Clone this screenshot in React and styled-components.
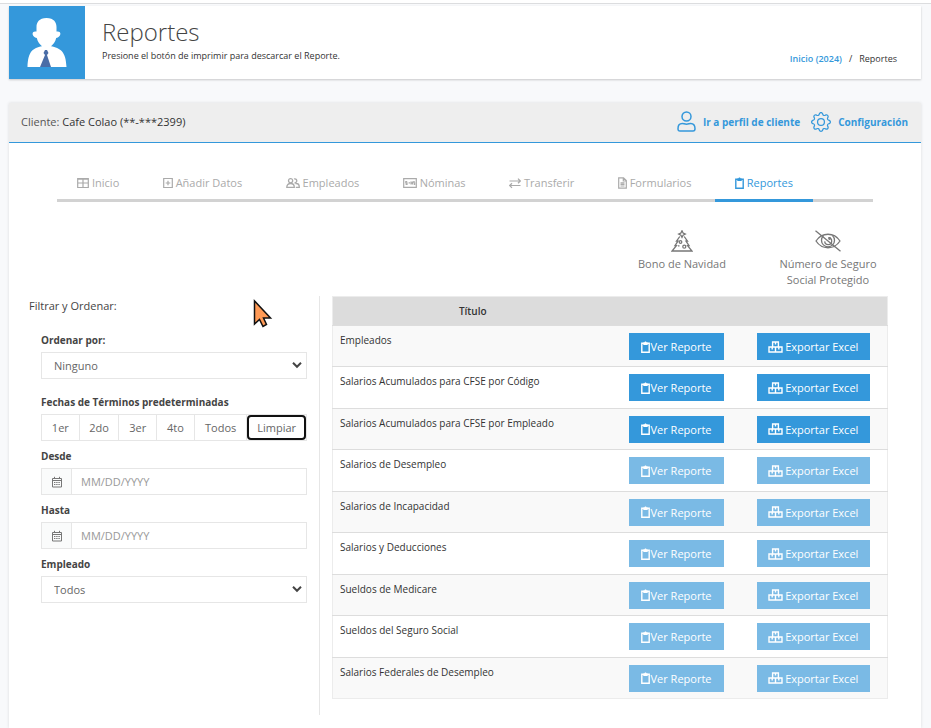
import React from 'react';
import styled, { createGlobalStyle, css } from 'styled-components';
import { BsGear } from 'react-icons/bs';

const BLUE = '#3498db';

const GlobalStyle = createGlobalStyle`
  * {
    box-sizing: border-box;
  }
  body {
    margin: 0;
    background: #f8f9fb;
    color: #444;
    font-family: 'Open Sans', sans-serif;
    font-size: 11px;
    line-height: 16px;
  }
  button, input, select {
    font-family: inherit;
  }
`;

const Page = styled.div`
  display: flex;
  flex-direction: column;
  min-height: 100vh;
  padding: 0 10px 0 9px;
`;

const TopStrip = styled.div`
  height: 4px;
  margin: 0 -10px 2px -9px;
  background: white;
  border-bottom: 1px solid #dcdddf;
`;

const TitleBar = styled.header`
  display: flex;
  height: 73px;
  margin-bottom: 24px;
  background: white;
  box-shadow: 0 1px 2px rgba(0, 0, 0, 0.2);
`;

const Avatar = styled.div`
  display: flex;
  align-items: flex-start;
  justify-content: center;
  width: 76px;
  padding-top: 12px;
  background: ${BLUE};
`;

const TitleText = styled.div`
  flex: 1;
  padding: 9px 0 0 17px;
`;

const Title = styled.h1`
  margin: 0;
  color: #444;
  font-size: 24px;
  font-weight: 300;
  line-height: 33px;
`;

const Subtitle = styled.p`
  margin: 0;
  color: #333;
  font-size: 9px;
`;

const Breadcrumb = styled.nav`
  display: flex;
  gap: 7px;
  padding: 45px 24px 0 0;
  color: #333;
  font-size: 9px;
  font-weight: 500;
`;

const Crumb = styled.a`
  color: ${BLUE};
  font-weight: 600;
  text-decoration: none;
`;

const Panel = styled.main`
  flex: 1;
  background: white;
  box-shadow: 0 0 3px rgba(0, 0, 0, 0.12);
`;

const PanelHeader = styled.div`
  display: flex;
  align-items: center;
  justify-content: space-between;
  height: 40px;
  padding: 0 13px 2px 12px;
  background: #eee;
  border-bottom: 1px solid ${BLUE};
`;

const Client = styled.span`
  color: #555;

  b {
    color: #333;
    font-weight: 400;
  }
`;

const HeaderLinks = styled.div`
  display: flex;
  align-items: center;
  gap: 11px;
`;

const HeaderLink = styled.a`
  display: flex;
  align-items: center;
  gap: 7px;
  color: ${BLUE};
  font-size: 10px;
  font-weight: 700;
  text-decoration: none;
`;

const Tabs = styled.nav`
  display: flex;
  justify-content: space-between;
  margin: 28px 48px 0;
  padding-right: 60px;
  border-bottom: 3px solid #d2d2d2;
`;

const Tab = styled.a`
  display: flex;
  align-items: center;
  gap: 3px;
  height: 31px;
  margin-bottom: -3px;
  padding: 0 20px 8px;
  color: #aaa;
  text-decoration: none;
  white-space: nowrap;
  ${({ $active }) => $active && css`
    color: ${BLUE};
    box-shadow: inset 0 -3px 0 ${BLUE};
  `}
`;

const Actions = styled.div`
  display: flex;
  justify-content: flex-end;
  padding: 28px 20px 8px;
`;

const Action = styled.button`
  display: flex;
  flex-direction: column;
  align-items: center;
  gap: 4px;
  width: 146px;
  padding: 0 20px;
  background: none;
  border: 0;
  color: #777;
  font-size: 11px;
  line-height: 16px;
`;

const Content = styled.div`
  display: grid;
  grid-template-columns: 311px 1fr;
  padding-right: 33px;
`;

const Filters = styled.form`
  padding: 2px 12px 103px 20px;
  border-right: 1px solid #e6e6e6;
`;

const FilterTitle = styled.h2`
  margin: 0 0 19px;
  color: #444;
  font-size: 11px;
  font-weight: 400;
  line-height: 16px;
`;

const Field = styled.div`
  margin: 0 0 ${({ $gap }) => $gap || 8}px 12px;
`;

const Label = styled.label`
  display: block;
  height: 19px;
  color: #444;
  font-size: 10px;
  font-weight: 700;
  line-height: 14px;
`;

const SelectBox = styled.div`
  position: relative;

  svg {
    position: absolute;
    top: 9px;
    right: 5px;
    pointer-events: none;
  }
`;

const Select = styled.select`
  display: block;
  width: 100%;
  height: 27px;
  padding: 0 12px;
  appearance: none;
  background: white;
  border: 1px solid #e6e6e6;
  border-radius: 0;
  color: #666;
  font-size: 11px;
`;

const TermGroup = styled.div`
  display: grid;
  grid-template-columns: 38fr 40fr 38fr 38fr 53fr 59fr;
  height: 27px;
  border: 1px solid #e6e6e6;
`;

const TermButton = styled.button`
  padding: 0;
  background: white;
  border: 0;
  border-right: 1px solid #e6e6e6;
  color: #666;
  font-size: 11px;
  ${({ $focused }) => $focused && css`
    border: 2px solid #111;
    border-radius: 4px;
  `}
`;

const DateBox = styled.div`
  display: flex;
  height: 27px;
  border: 1px solid #e6e6e6;
`;

const DateIcon = styled.span`
  display: flex;
  align-items: center;
  justify-content: center;
  width: 30px;
  background: #fafbfb;
  border-right: 1px solid #e6e6e6;
  color: #777;
`;

const DateInput = styled.input`
  flex: 1;
  min-width: 0;
  padding: 0 9px;
  border: 0;
  font-size: 11px;

  &::placeholder {
    color: #999;
  }
`;

const Table = styled.table`
  width: calc(100% - 12px);
  height: 403px;
  margin: 0 0 16px 12px;
  border: 1px solid #ececec;
  border-collapse: collapse;
  table-layout: fixed;
`;

const HeadCell = styled.th`
  width: ${({ $width }) => $width || 'auto'};
  height: 29px;
  padding: 0;
  background: #dcdcdc;
  color: #333;
  font-size: 10px;
  font-weight: 600;
`;

const Row = styled.tr`
  border-top: 1px solid #ddd;

  &:nth-child(odd) {
    background: #f9f9f9;
  }
`;

const Cell = styled.td`
  padding: 7px 0 0;
  color: #333;
  font-size: 10px;
  line-height: 14px;
  text-align: center;
  vertical-align: top;
`;

const NameCell = styled(Cell)`
  padding-left: 7px;
  text-align: left;
`;

const ReportButton = styled.button`
  display: inline-flex;
  align-items: center;
  justify-content: center;
  gap: ${({ $wide }) => ($wide ? 2 : 1)}px;
  width: ${({ $wide }) => ($wide ? 113 : 95)}px;
  height: 27px;
  padding: 0;
  background: ${BLUE};
  border: 0;
  color: white;
  font-size: 11px;
  font-weight: 500;
  white-space: nowrap;

  &:disabled {
    background: #7abae5;
  }
`;

const Pointer = styled.svg`
  position: absolute;
  top: 299px;
  left: 252px;
  pointer-events: none;
`;

const Line = ({ width = 12, height = 12, stroke = 1, children }) => (
  <svg width={width} height={height} viewBox={`0 0 ${width} ${height}`} fill="none" stroke="currentColor" strokeWidth={stroke} aria-hidden="true">
    {children}
  </svg>
);

const TableIcon = () => (
  <Line stroke={1.2}><path d="M.7 1.5h10.6v9H.7zM.7 2.2h10.6M6 2v8.5M.7 6h10.6" /></Line>
);
const PlusIcon = () => (
  <Line width={10} stroke={1.2}><path d="M.7 1.5h8.6v9H.7zM5 3.7v4.6M2.7 6h4.6" /></Line>
);
const PeopleIcon = () => (
  <Line width={14} stroke={1.3}>
    <circle cx="4.6" cy="3.8" r="2.1" />
    <path d="M.8 10.3c0-2.4 1.4-3.8 3.8-3.8s3.7 1.4 3.7 3.8zM8 2a2 2 0 1 1 .4 3.800M9.500 6.500h.8c1.900 0 3 1.400 3 3.800H9.800" />
  </Line>
);
const MoneyIcon = () => (
  <Line width={14} stroke={1.2}>
    <path d="M.7 1.700h12.600v8.600H.7z" />
    <path d="M4.200 4.500H2.800v1.400H4v1.500H2.600M5.600 5.900H7M8 4.500v3M9.400 4.500v3M8 6h1.500M11.700 4.500h-.9v1.300h.9v1.700h-1" />
  </Line>
);
const TransferIcon = () => (
  <Line stroke={1.2}><path d="M.5 4h11M9 1.700 11.300 4 9 6.200M11.500 8.500H.7M3 6.300.7 8.500 3 10.800" /></Line>
);
const FileIcon = () => (
  <Line width={9} stroke={1.2}><path d="M.7.8h4.800L8.300 3.500v7.700H.7zM5.300 1v3h2.900M2.500 5.800h4M2.500 7.400h4M2.500 9h4" /></Line>
);
const ClipboardIcon = () => (
  <Line width={9} stroke={1.4}>
    <path d="M.8 2.300h7.400v8.900H.8z" />
    <path d="M2.300 3.900V1.600h1.100c.1-1.500 2.100-1.500 2.200 0h1.100v2.300z" fill="currentColor" stroke="none" />
  </Line>
);
const BoxesIcon = () => (
  <Line width={15} stroke={1.4}>
    <path d="M4.600 1h5.800v5H4.600zM1 6h6.500v5H1zM7.500 6H14v5H7.500zM7.500 1v2.500M4.200 6v2.500M10.800 6v2.500" />
  </Line>
);
const CalendarIcon = () => (
  <Line>
    <path d="M1.500 2.500h9v8.500h-9zM1.500 4.500h9M3.500.8v2M8.500.8v2" />
    <path d="M3 6.500h6M3 8.500h6" strokeDasharray="1.400 .8" />
  </Line>
);
const ProfileIcon = () => (
  <Line width={19} height={21} stroke={1.5}>
    <circle cx="9.5" cy="5.5" r="4.5" />
    <path d="M1 17.700c0-3.500 1.300-5.300 4.300-5.300 1.500 0 2.200.8 4.200.8s2.700-.8 4.200-.8c3 0 4.300 1.800 4.300 5.300 0 1.600-.6 2.300-2 2.300H3c-1.400 0-2-.7-2-2.300z" />
  </Line>
);
const TreeIcon = () => (
  <Line width={22} height={22} stroke={1.3}>
    <path d="m11 .8 1.100 2.200 2.200 1.100-2.200 1.100L11 7.400 9.900 5.200 7.700 4.100 9.900 3z" />
    <path d="M8.800 6.500 5.500 11.200H7l-3 4.500h1.400L1 21h20l-4.400-5.300H18l-3-4.500h1.500L13.200 6.500" />
    <circle cx="9.5" cy="12" r="1.300" />
    <circle cx="13.3" cy="16.700" r="1.500" />
    <path d="M7 15.800h1.500" />
  </Line>
);
const HiddenIcon = () => (
  <Line width={28} height={22} stroke={1.3}>
    <path d="M2 11c6-9 18-9 24 0-6 9-18 9-24 0zM1.500.8l25 20.500" />
    <path d="M18.500 5.600a6.500 6.500 0 1 1-9 0" />
    <path d="M14.500 7.600a3.500 3.500 0 1 1-3.800 3.800" />
    <circle cx="15.600" cy="8.500" r=".8" />
  </Line>
);
const ChevronIcon = () => (
  <Line width={10} height={8} stroke={2}><path d="m1 1.800 4 4 4-4" /></Line>
);
const PersonIcon = () => (
  <svg width="40" height="50" viewBox="0 0 40 50" aria-hidden="true">
    <path
      fill="white"
      d="M19.500 0C12 0 9.500 4.500 9.500 9v4.500C4 12.500 4.500 18.500 9.800 20c.8 4 3.200 6.500 5.200 8.200C6 30 1 33 .5 49h39C39 33 33 30 24 28.200c2-1.700 4.400-4.200 5.200-8.200 5.300-1.500 5.800-7.500.3-6.500V9c0-4.500-2.500-9-10-9z"
    />
    <path fill="#4a6da7" d="m18 32-1.500 3 1.500 2-5 12h11l-4-12 1.500-2-1.500-3z" />
  </svg>
);

const tabs = [
  { name: 'Inicio', icon: TableIcon },
  { name: 'Añadir Datos', icon: PlusIcon },
  { name: 'Empleados', icon: PeopleIcon },
  { name: 'Nóminas', icon: MoneyIcon },
  { name: 'Transferir', icon: TransferIcon },
  { name: 'Formularios', icon: FileIcon },
  { name: 'Reportes', icon: ClipboardIcon, active: true },
];

const terms = ['1er', '2do', '3er', '4to', 'Todos', 'Limpiar'];

const reports = [
  { name: 'Empleados', enabled: true },
  { name: 'Salarios Acumulados para CFSE por Código', enabled: true },
  { name: 'Salarios Acumulados para CFSE por Empleado', enabled: true },
  { name: 'Salarios de Desempleo' },
  { name: 'Salarios de Incapacidad' },
  { name: 'Salarios y Deducciones' },
  { name: 'Sueldos de Medicare' },
  { name: 'Sueldos del Seguro Social' },
  { name: 'Salarios Federales de Desempleo' },
];

const SelectField = ({ id, label, option, gap }) => (
  <Field $gap={gap}>
    <Label htmlFor={id}>{label}</Label>
    <SelectBox>
      <Select id={id}>
        <option>{option}</option>
      </Select>
      <ChevronIcon />
    </SelectBox>
  </Field>
);

const DateField = ({ id, label }) => (
  <Field>
    <Label htmlFor={id}>{label}</Label>
    <DateBox>
      <DateIcon><CalendarIcon /></DateIcon>
      <DateInput id={id} type="text" placeholder="MM/DD/YYYY" />
    </DateBox>
  </Field>
);

const App = () => (
  <>
    <GlobalStyle />
    <Page>
      <TopStrip />
      <TitleBar>
        <Avatar><PersonIcon /></Avatar>
        <TitleText>
          <Title>Reportes</Title>
          <Subtitle>Presione el botón de imprimir para descarcar el Reporte.</Subtitle>
        </TitleText>
        <Breadcrumb>
          <Crumb href="#inicio">Inicio (2024)</Crumb>
          <span>/</span>
          <span>Reportes</span>
        </Breadcrumb>
      </TitleBar>
      <Panel>
        <PanelHeader>
          <Client>Cliente: <b>Cafe Colao (**-***2399)</b></Client>
          <HeaderLinks>
            <HeaderLink href="#perfil"><ProfileIcon />Ir a perfil de cliente</HeaderLink>
            <HeaderLink href="#configuracion"><BsGear size={20} />Configuración</HeaderLink>
          </HeaderLinks>
        </PanelHeader>
        <Tabs>
          {tabs.map(({ name, icon: Icon, active }) => (
            <Tab key={name} href={`#${name}`} $active={active}>
              <Icon />
              {name}
            </Tab>
          ))}
        </Tabs>
        <Actions>
          <Action type="button"><TreeIcon />Bono de Navidad</Action>
          <Action type="button"><HiddenIcon />Número de Seguro Social Protegido</Action>
        </Actions>
        <Content>
          <Filters>
            <FilterTitle>Filtrar y Ordenar:</FilterTitle>
            <SelectField id="orden" label="Ordenar por:" option="Ninguno" gap={16} />
            <Field>
              <Label as="div" id="terminos">Fechas de Términos predeterminadas</Label>
              <TermGroup role="group" aria-labelledby="terminos">
                {terms.map((term) => (
                  <TermButton key={term} type="button" $focused={term === 'Limpiar'}>{term}</TermButton>
                ))}
              </TermGroup>
            </Field>
            <DateField id="desde" label="Desde" />
            <DateField id="hasta" label="Hasta" />
            <SelectField id="empleado" label="Empleado" option="Todos" />
          </Filters>
          <Table>
            <thead>
              <tr>
                <HeadCell>Título</HeadCell>
                <HeadCell $width="127px" />
                <HeadCell $width="148px" />
              </tr>
            </thead>
            <tbody>
              {reports.map(({ name, enabled }) => (
                <Row key={name}>
                  <NameCell>{name}</NameCell>
                  <Cell>
                    <ReportButton type="button" disabled={!enabled}><ClipboardIcon />Ver Reporte</ReportButton>
                  </Cell>
                  <Cell>
                    <ReportButton type="button" $wide disabled={!enabled}><BoxesIcon />Exportar Excel</ReportButton>
                  </Cell>
                </Row>
              ))}
            </tbody>
          </Table>
        </Content>
      </Panel>
    </Page>
    <Pointer width="22" height="30" viewBox="0 0 22 30" aria-hidden="true">
      <path d="M2.500 2v23l5-4.500 3.500 7 3.500-2-3-6.500h7z" fill="#ff9a56" stroke="#111" strokeWidth="1.500" />
    </Pointer>
  </>
);

export default App;
